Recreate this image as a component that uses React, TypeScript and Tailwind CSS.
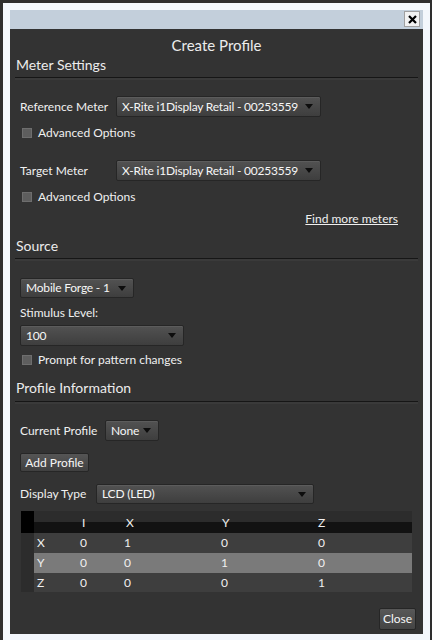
import React from "react";

const font = { fontFamily: "Lato, 'Open Sans', sans-serif" };

function Select({ value, w }: { value: string; w: string }) {
  return (
    <div
      className={`${w} h-full flex items-center justify-between pl-[5px] pr-[7px] border border-[#262626] rounded-[2px] bg-[linear-gradient(#525252,#3e3e3e)] text-[#f6f6f6] text-[12px] tracking-[-0.2px] shadow-[inset_0_1px_0_#5c5c5c]`}
    >
      <span className="whitespace-nowrap">{value}</span>
      <svg width="8" height="5" viewBox="0 0 8 5" className="shrink-0">
        <path d="M0 0 L8 0 L4 5 Z" fill="#0d0d0d" />
      </svg>
    </div>
  );
}

function Check({ label, mt }: { label: string; mt: string }) {
  return (
    <div className={`${mt} h-[16px] flex items-center pl-[12px] text-[12px] text-[#f0f0f0]`}>
      <div className="w-[10px] h-[10px] bg-[#5e5e5e] border border-[#6e6e6e] mr-[6px]" />
      <span className="whitespace-nowrap">{label}</span>
    </div>
  );
}

function Header({ label, mt }: { label: string; mt: string }) {
  return (
    <div className={`${mt} h-[20px] leading-[20px] pl-[6px] text-[14px] text-[#ececec]`}>{label}</div>
  );
}

function Sep({ mt }: { mt: string }) {
  return (
    <div className={`${mt} mx-[5px]`}>
      <div className="h-[1px] bg-[#161616]" />
      <div className="h-[2px] bg-[#3a3a3a]" />
    </div>
  );
}

const rows = [
  ["X", "0", "1", "0", "0"],
  ["Y", "0", "0", "1", "0"],
  ["Z", "0", "0", "0", "1"],
];

export default function App() {
  return (
    <div className="w-[432px] h-[640px] bg-[#2e2e2e] pt-[3px] pl-[3px] pr-[2px] overflow-hidden" style={font}>
      <div className="h-[637px] bg-[#f3f7fc] px-[7px] pt-[7px] pb-[6px] flex flex-col">
        <div className="h-[19px] bg-[#c3cfdb] flex justify-end items-start pr-[3px] pt-[1px]">
          <div className="w-[16px] h-[16px] bg-[#f2f2f2] border border-[#a0a0a0] flex items-center justify-center">
            <svg width="9" height="9" viewBox="0 0 9 9">
              <path d="M1 1 L8 8 M8 1 L1 8" stroke="#000" strokeWidth="2.2" />
            </svg>
          </div>
        </div>
        <div className="flex-1 bg-[#333333] flex flex-col text-[#f0f0f0]">
          <div className="mt-[6px] h-[20px] leading-[20px] text-center text-[15px] text-[#ececec]">Create Profile</div>
          <Header label="Meter Settings" mt="mt-0" />
          <Sep mt="mt-[2px]" />

          <div className="mt-[16px] h-[21px] flex items-center pl-[10px]">
            <span className="w-[96px] shrink-0 whitespace-nowrap text-[12px]">Reference Meter</span>
            <Select value="X-Rite i1Display Retail - 00253559" w="w-[205px]" />
          </div>
          <Check label="Advanced Options" mt="mt-[8px]" />

          <div className="mt-[19px] h-[21px] flex items-center pl-[10px]">
            <span className="w-[96px] shrink-0 whitespace-nowrap text-[12px]">Target Meter</span>
            <Select value="X-Rite i1Display Retail - 00253559" w="w-[205px]" />
          </div>
          <Check label="Advanced Options" mt="mt-[8px]" />

          <div className="mt-[6px] h-[16px] flex justify-end pr-[25px] text-[12px] leading-[16px]">
            <span className="underline">Find more meters</span>
          </div>

          <Header label="Source" mt="mt-[9px]" />
          <Sep mt="mt-[2px]" />

          <div className="mt-[17px] h-[20px] pl-[10px] flex">
            <Select value="Mobile Forge - 1" w="w-[114px]" />
          </div>
          <div className="mt-[7px] h-[16px] leading-[16px] pl-[10px] text-[12px]">Stimulus Level:</div>
          <div className="mt-[4px] h-[21px] pl-[10px] flex">
            <Select value="100" w="w-[164px]" />
          </div>
          <Check label="Prompt for pattern changes" mt="mt-[6px]" />

          <Header label="Profile Information" mt="mt-[10px]" />
          <Sep mt="mt-[3px]" />

          <div className="mt-[16px] h-[21px] flex items-center pl-[10px]">
            <span className="w-[85px] shrink-0 whitespace-nowrap text-[12px]">Current Profile</span>
            <Select value="None" w="w-[54px]" />
          </div>
          <div className="mt-[12px] h-[19px] pl-[10px] flex">
            <div className="w-[69px] h-full flex items-center justify-center border border-[#262626] rounded-[2px] bg-[linear-gradient(#555555,#404040)] text-[12px] text-[#f6f6f6] whitespace-nowrap">
              Add Profile
            </div>
          </div>
          <div className="mt-[12px] h-[20px] flex items-center pl-[10px]">
            <span className="w-[76px] shrink-0 whitespace-nowrap text-[12px]">Display Type</span>
            <Select value="LCD (LED)" w="w-[218px]" />
          </div>

          <div className="mt-[7px] ml-[11px] w-[391px] text-[12px] text-[#f0f0f0]">
            <div className="h-[22px] grid grid-cols-[13px_43px_44px_97px_97px_1fr] bg-[linear-gradient(#2c2c2c_0%,#2c2c2c_50%,#121212_50%,#121212_100%)]">
              <div className="bg-black" />
              <div />
              <div className="pl-[5px] pt-[4px] leading-[16px]">I</div>
              <div className="pl-[5px] pt-[4px] leading-[16px]">X</div>
              <div className="pl-[4px] pt-[4px] leading-[16px]">Y</div>
              <div className="pl-[3px] pt-[4px] leading-[16px]">Z</div>
            </div>
            {rows.map((r, i) => (
              <div
                key={r[0]}
                className={`${i === 2 ? "h-[19px]" : "h-[20px]"} grid grid-cols-[13px_43px_44px_97px_97px_1fr] items-stretch ${i === 1 ? "bg-[#7a7a7a]" : "bg-[#3e3e3e]"}`}
              >
                <div className="bg-[#2c2c2c]" />
                {r.map((c, j) => (
                  <div key={j} className="pl-[3px] flex items-center">{c}</div>
                ))}
              </div>
            ))}
          </div>

          <div className="mt-[16px] h-[22px] flex justify-end pr-[7px]">
            <div className="w-[37px] h-full flex items-center justify-center border border-[#262626] rounded-[2px] bg-[linear-gradient(#585858,#444444)] text-[12px] text-[#f6f6f6]">
              Close
            </div>
          </div>
        </div>
      </div>
    </div>
  );
}
